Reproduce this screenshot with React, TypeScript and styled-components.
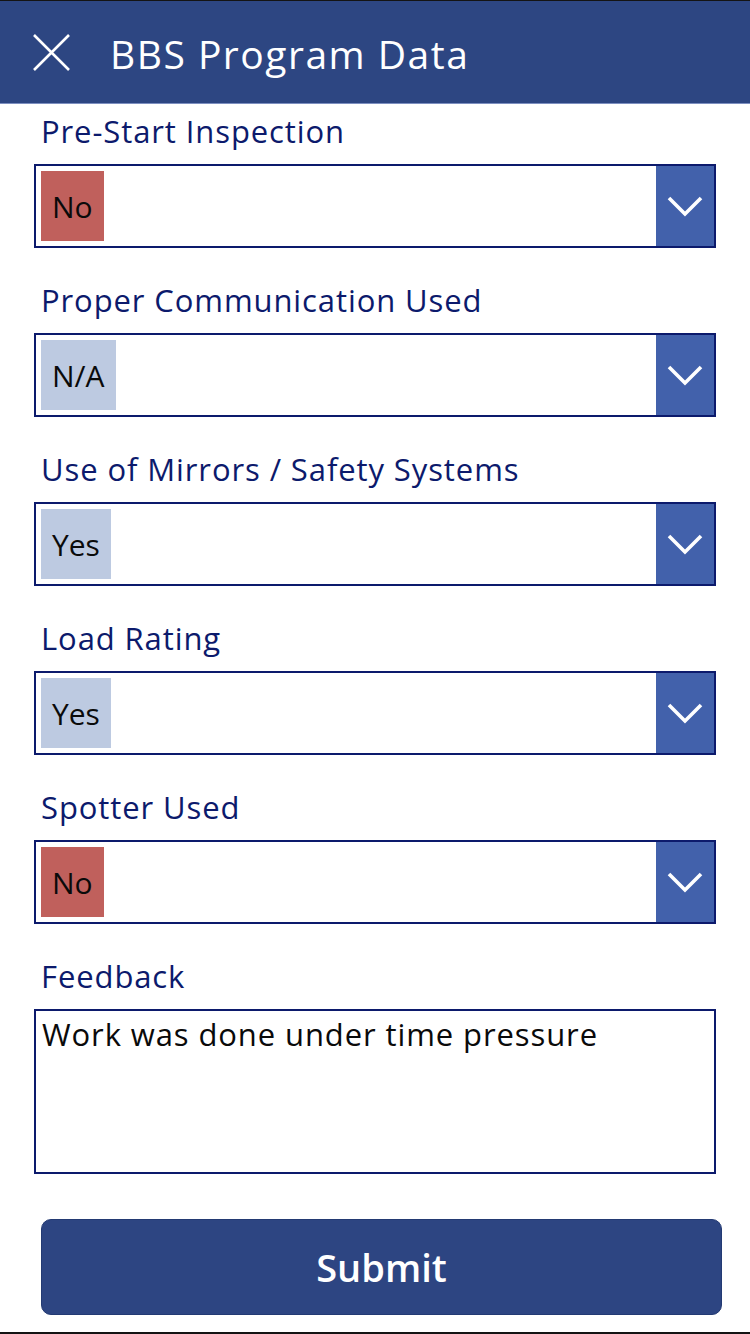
import React from 'react';
import styled, { createGlobalStyle } from 'styled-components';

type Tone = 'bad' | 'neutral';

interface Field {
  label: string;
  value: string;
  tone: Tone;
}

const FIELDS: Field[] = [
  { label: 'Pre-Start Inspection', value: 'No', tone: 'bad' },
  { label: 'Proper Communication Used', value: 'N/A', tone: 'neutral' },
  { label: 'Use of Mirrors / Safety Systems', value: 'Yes', tone: 'neutral' },
  { label: 'Load Rating', value: 'Yes', tone: 'neutral' },
  { label: 'Spotter Used', value: 'No', tone: 'bad' },
];

const NAVY = '#0c1a6c';

const GlobalStyle = createGlobalStyle`
  html, body {
    margin: 0;
    padding: 0;
    background: #ffffff;
    font-family: "Open Sans", "Noto Sans", "Liberation Sans", sans-serif;
  }
  * {
    box-sizing: border-box;
  }
`;

const Screen = styled.div`
  width: 750px;
  height: 1334px;
  display: flex;
  flex-direction: column;
  border-top: 1px solid #141414;
  border-bottom: 2px solid #141414;
  background: #ffffff;
  overflow: hidden;
`;

const Header = styled.header`
  height: 103px;
  flex-shrink: 0;
  display: flex;
  align-items: center;
  gap: 40px;
  padding-left: 33px;
  background: #2d4682;
  border-bottom: 1px solid #7d8fc0;
`;

const CloseButton = styled.button`
  width: 37px;
  height: 37px;
  padding: 0;
  border: none;
  background: none;
  display: flex;
  cursor: pointer;
`;

const Title = styled.h1`
  margin: 3px 0 0;
  font-size: 39px;
  font-weight: 400;
  color: #ffffff;
  line-height: 1;
  letter-spacing: 1.5px;
`;

const Form = styled.form`
  display: flex;
  flex-direction: column;
  gap: 32px;
  padding: 7px 34px 0;
`;

const FieldBlock = styled.div`
  display: flex;
  flex-direction: column;
  gap: 13px;
`;

const Label = styled.label`
  padding-left: 7px;
  font-size: 31px;
  line-height: 40px;
  letter-spacing: 0.9px;
  color: ${NAVY};
`;

const Dropdown = styled.div`
  height: 84px;
  display: flex;
  align-items: stretch;
  border: 2px solid ${NAVY};
  background: #ffffff;
`;

const Selection = styled.div`
  flex: 1;
  display: flex;
  align-items: center;
  padding: 5px;
`;

const Chip = styled.span<{ $tone: Tone }>`
  height: 100%;
  display: flex;
  align-items: center;
  padding: 0 11px;
  font-size: 30px;
  color: #0a0a0a;
  background: ${p => (p.$tone === 'bad' ? '#c0605c' : '#bdcae1')};
`;

const ChevronButton = styled.span`
  width: 58px;
  display: flex;
  align-items: center;
  justify-content: center;
  background: #4261ab;
`;

const TextArea = styled.div`
  height: 165px;
  padding: 3px 6px;
  border: 2px solid ${NAVY};
  font-size: 31px;
  line-height: 40px;
  letter-spacing: 0.9px;
  color: #0a0a0a;
`;

const SubmitButton = styled.button`
  margin: 45px 0 0 41px;
  width: 681px;
  height: 96px;
  border: 1px solid #233a73;
  border-radius: 10px;
  background: #2d4582;
  color: #ffffff;
  font-family: "Open Sans", "Noto Sans", sans-serif;
  font-size: 38px;
  font-weight: 600;
  cursor: pointer;
`;

const CloseIcon = () => (
  <svg width="37" height="37" viewBox="0 0 37 37" fill="none">
    <path d="M1 1 L36 36 M36 1 L1 36" stroke="#ffffff" strokeWidth="2.6" />
  </svg>
);

const ChevronIcon = () => (
  <svg width="36" height="22" viewBox="0 0 36 22" fill="none">
    <path d="M2 3 L18 19 L34 3" stroke="#ffffff" strokeWidth="3.6" />
  </svg>
);

export default function App() {
  return (
    <>
      <GlobalStyle />
      <Screen>
        <Header>
          <CloseButton aria-label="Close">
            <CloseIcon />
          </CloseButton>
          <Title>BBS Program Data</Title>
        </Header>

        <Form onSubmit={e => e.preventDefault()}>
          {FIELDS.map(field => (
            <FieldBlock key={field.label}>
              <Label>{field.label}</Label>
              <Dropdown>
                <Selection>
                  <Chip $tone={field.tone}>{field.value}</Chip>
                </Selection>
                <ChevronButton>
                  <ChevronIcon />
                </ChevronButton>
              </Dropdown>
            </FieldBlock>
          ))}
          <FieldBlock>
            <Label>Feedback</Label>
            <TextArea>Work was done under time pressure</TextArea>
          </FieldBlock>
        </Form>

        <SubmitButton type="button">Submit</SubmitButton>
      </Screen>
    </>
  );
}
